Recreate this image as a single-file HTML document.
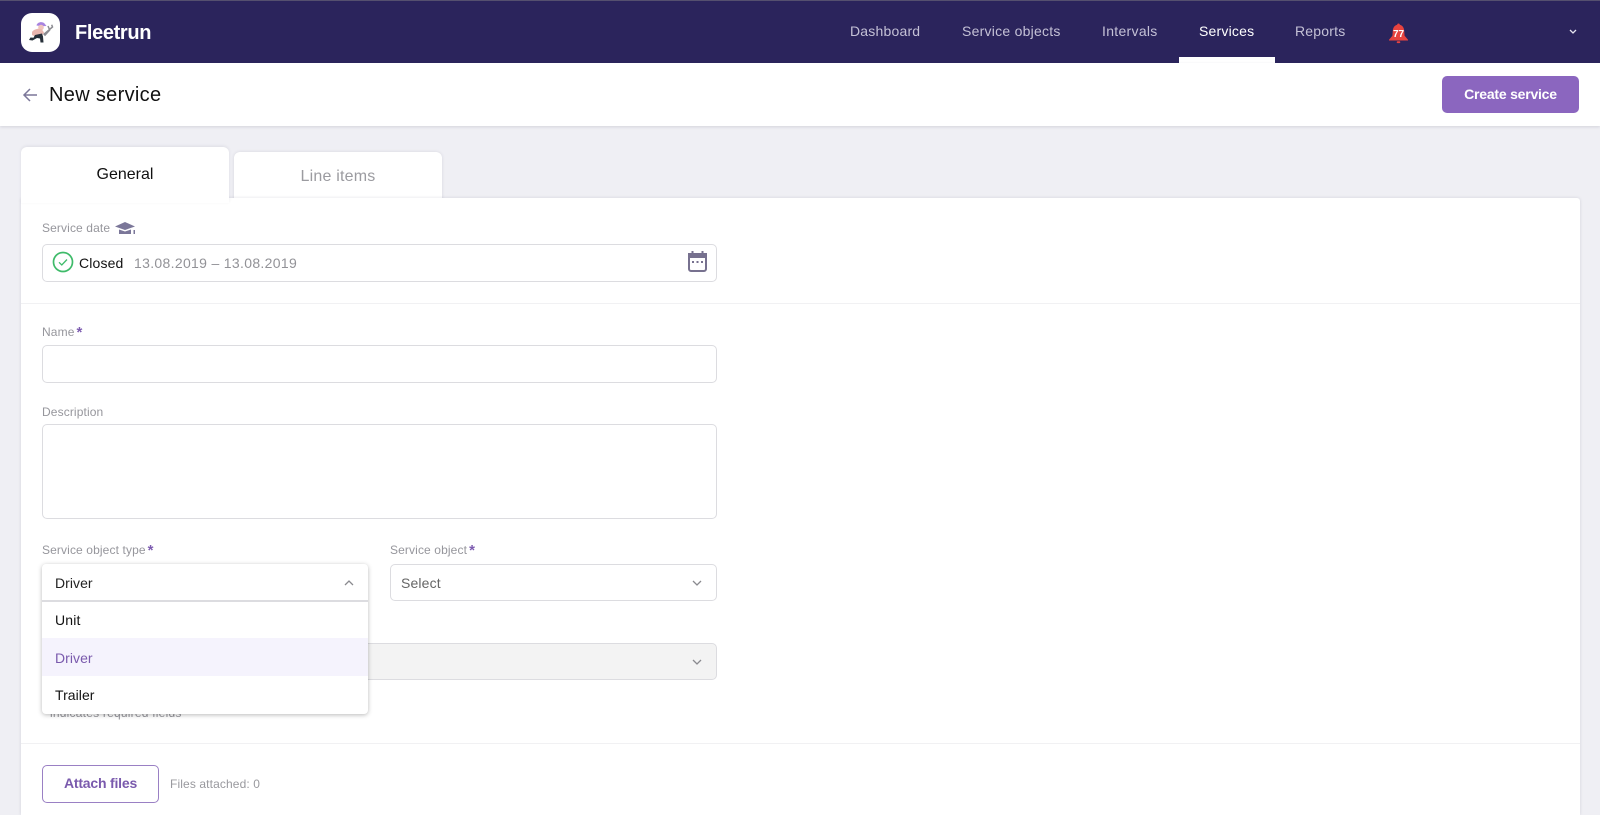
<!DOCTYPE html>
<html><head><meta charset="utf-8"><title>Fleetrun</title>
<style>
*{box-sizing:border-box}
html,body{margin:0;padding:0;width:1600px;height:815px;overflow:hidden;background:#efeff4;font-family:"Liberation Sans",sans-serif;-webkit-font-smoothing:antialiased}
#w{position:relative;width:1600px;height:815px;overflow:hidden}
.a{position:absolute}
.t{position:absolute;white-space:nowrap;line-height:20px;height:20px}
.nav{color:#c4c1d6;font-size:14px;top:21px;letter-spacing:.2px}
.lb{color:#96969c;font-size:12px;letter-spacing:.12px}
.st{color:#7d5cb0;font-size:15px;font-weight:700;margin-left:2px;position:relative;top:1px;line-height:10px;letter-spacing:0}
.in{position:absolute;background:#fff;border:1px solid #dcdce0;border-radius:5px}
.fld{font-size:14px;color:#222;letter-spacing:.05px}
</style></head><body><div id="w">
<div class="a" style="left:0;top:1px;width:1600px;height:62px;background:#2b245c"></div>
<div class="a" style="left:0;top:0;width:1600px;height:1px;background:#55506f"></div>
<div class="a" style="left:21px;top:13px;width:39px;height:39px;background:#fff;border-radius:11px"></div>
<svg class="a" style="left:21px;top:13px" width="39" height="39" viewBox="0 0 39 39">
<path d="M15.500 12.500c.5-3.500 6-4.500 8-2l2 2.500-5 .2z" fill="#a883e0"/>
<circle cx="20" cy="14.500" r="2.800" fill="#f0c4bd"/>
<path d="M11 19c2-3 7-4 10-2.500l2 3-2 3-6 1.500-4-2z" fill="#e9b7b0"/>
<path d="M14 22l7-1.500 1 3 .5 6h-3l-.5-4-3-.5-4.500 2.500-3.500-.5 1.500-2.500 3 .2z" fill="#27303a"/>
<path d="M22 21l6-5 1.500 1.200-5.500 6z" fill="#8c8c92"/>
<path d="M27 13l1.500 3.500 3-2.500-.8-2.200" fill="none" stroke="#8c8c92" stroke-width="1.500"/>
</svg>
<div class="t" style="left:75px;top:22px;color:#fff;font-size:20px;font-weight:700;line-height:22px;height:22px;letter-spacing:-.35px">Fleetrun</div>
<div class="t nav" style="left:850px">Dashboard</div>
<div class="t nav" style="left:962px;letter-spacing:.25px">Service objects</div>
<div class="t nav" style="left:1102px;letter-spacing:.3px">Intervals</div>
<div class="t nav" style="left:1199px;color:#fff">Services</div>
<div class="t nav" style="left:1295px">Reports</div>
<div class="a" style="left:1179px;top:57px;width:96px;height:6px;background:#fff"></div>
<svg class="a" style="left:1387px;top:22px" width="23" height="22" viewBox="0 0 23 22"><path d="M11.500 1.500c.8 0 1.300.5 1.300 1.300 3 .8 4.200 3.200 4.400 6l.4 5 3.400 4v.7H2v-.7l3.400-4 .4-5c.2-2.800 1.400-5.200 4.400-6 0-.8.500-1.300 1.300-1.300z" fill="#e8433f"/><rect x="9.700" y="19.300" width="3.600" height="1.800" rx=".9" fill="#e8433f"/></svg>
<div class="t" style="left:1387px;top:25px;width:23px;text-align:center;color:#fff;font-size:10px;font-weight:700">77</div>
<svg class="a" style="left:1567px;top:28px" width="12" height="8" viewBox="0 0 12 8"><path d="M3 2l3 3 3-3" fill="none" stroke="#e6e5ef" stroke-width="1.300"/></svg>

<div class="a" style="left:0;top:63px;width:1600px;height:63px;background:#fff;box-shadow:0 1px 3px rgba(40,40,70,.14)"></div>
<svg class="a" style="left:22px;top:87px" width="16" height="16" viewBox="0 0 16 16"><path d="M15 8H2M8 2L2 8l6 6" fill="none" stroke="#7b7799" stroke-width="1.500"/></svg>
<div class="t" style="left:49px;top:84px;font-size:20px;line-height:22px;height:22px;color:#111;letter-spacing:.32px">New service</div>
<div class="a" style="left:1442px;top:76px;width:137px;height:37px;background:#8b66bf;border-radius:5px;color:#fff;font-weight:700;font-size:14px;line-height:37px;text-align:center;letter-spacing:-.22px">Create service</div>

<div class="a" style="left:234px;top:152px;width:208px;height:50px;background:#fff;border-radius:6px 6px 0 0;box-shadow:0 0 3px rgba(40,40,70,.12)"></div>
<div class="t" style="left:234px;top:167px;width:208px;text-align:center;color:#9b9ba0;font-size:16px;letter-spacing:.2px">Line items</div>
<div class="a" style="left:21px;top:198px;width:1559px;height:617px;background:#fff;border-radius:3px 3px 0 0;box-shadow:0 0 3px rgba(40,40,70,.14)"></div>
<div class="a" style="left:21px;top:147px;width:208px;height:56px;background:#fff;border-radius:6px 6px 0 0;box-shadow:0 -1px 3px rgba(40,40,70,.08)"></div>
<div class="t" style="left:21px;top:165px;width:208px;text-align:center;color:#111;font-size:16px">General</div>

<div class="t lb" style="left:42px;top:218px">Service date</div>
<svg class="a" style="left:114px;top:221px" width="22" height="15" viewBox="0 0 22 15"><path d="M11 1L1 5.500 11 9l10-3.500z" fill="#7b7799"/><path d="M5 8.500V13h12V8.500L11 10.500z" fill="#7b7799"/><rect x="19.500" y="9" width="1.500" height="4" fill="#7b7799"/></svg>
<div class="in" style="left:42px;top:244px;width:675px;height:37.500px"></div>
<svg class="a" style="left:52px;top:251px" width="22" height="22" viewBox="0 0 22 22"><circle cx="11" cy="11" r="9.500" fill="none" stroke="#3fbb6a" stroke-width="1.700"/><path d="M7 11.300l2.800 2.700 5.200-5.500" fill="none" stroke="#3fbb6a" stroke-width="1.300"/></svg>
<div class="t fld" style="left:79px;top:253px;color:#111;letter-spacing:.15px">Closed</div>
<div class="t fld" style="left:134px;top:253px;color:#929297;letter-spacing:.32px">13.08.2019 – 13.08.2019</div>
<svg class="a" style="left:687px;top:250px" width="21" height="23" viewBox="0 0 21 23"><rect x="2" y="4" width="17" height="17" rx="2" fill="#fff" stroke="#77718f" stroke-width="2"/><rect x="1" y="3" width="19" height="5" fill="#77718f"/><rect x="4.500" y="1" width="2" height="4" fill="#77718f"/><rect x="14.500" y="1" width="2" height="4" fill="#77718f"/><rect x="5" y="11" width="2" height="2" fill="#77718f"/><rect x="9.500" y="11" width="2" height="2" fill="#77718f"/><rect x="14" y="11" width="2" height="2" fill="#77718f"/></svg>
<div class="a" style="left:21px;top:303px;width:1559px;height:1px;background:#f1f1f3"></div>

<div class="t lb" style="left:42px;top:322px">Name<span class="st">*</span></div>
<div class="in" style="left:42px;top:345px;width:675px;height:37.500px"></div>
<div class="t lb" style="left:42px;top:402px">Description</div>
<div class="in" style="left:42px;top:424px;width:675px;height:94.500px"></div>

<div class="t lb" style="left:42px;top:540px">Service object type<span class="st">*</span></div>
<div class="t lb" style="left:390px;top:540px">Service object<span class="st">*</span></div>
<div class="in" style="left:390px;top:564px;width:327px;height:37px"></div>
<div class="t fld" style="left:401px;top:573px;color:#666;letter-spacing:.15px">Select</div>
<svg class="a" style="left:691px;top:578px" width="12" height="10" viewBox="0 0 12 10"><path d="M2 3l4 4 4-4" fill="none" stroke="#8a8a8f" stroke-width="1.300"/></svg>
<div class="in" style="left:300px;top:642.500px;width:417px;height:37.500px;background:#f3f3f3"></div>
<svg class="a" style="left:691px;top:657px" width="12" height="10" viewBox="0 0 12 10"><path d="M2 3l4 4 4-4" fill="none" stroke="#8a8a8f" stroke-width="1.300"/></svg>
<div class="t" style="left:50px;top:703px;font-size:12px;color:#96969c;letter-spacing:.22px">indicates required fields</div>

<div class="a" style="left:42px;top:564px;width:326px;height:149.500px;background:#fff;border-radius:4px;box-shadow:0 1px 5px rgba(0,0,0,.28)"></div>
<div class="a" style="left:42px;top:600px;width:326px;height:2px;background:#dcdce0"></div>
<div class="a" style="left:42px;top:638px;width:326px;height:38px;background:#f5f3fd"></div>
<div class="t fld" style="left:55px;top:573px">Driver</div>
<svg class="a" style="left:343px;top:578px" width="12" height="10" viewBox="0 0 12 10"><path d="M2 7l4-4 4 4" fill="none" stroke="#8a8a8f" stroke-width="1.300"/></svg>
<div class="t fld" style="left:55px;top:610px;color:#111;letter-spacing:.15px">Unit</div>
<div class="t fld" style="left:55px;top:648px;color:#7a5aad">Driver</div>
<div class="t fld" style="left:55px;top:685px;color:#111">Trailer</div>

<div class="a" style="left:21px;top:743px;width:1559px;height:1px;background:#f1f1f3"></div>
<div class="a" style="left:42px;top:765px;width:117px;height:37.500px;background:#fff;border:1px solid #9a80c4;border-radius:5px;color:#7a5aad;font-weight:700;font-size:14px;line-height:34px;text-align:center;letter-spacing:-.2px">Attach files</div>
<div class="t lb" style="left:170px;top:774px;color:#99999e;letter-spacing:.12px">Files attached: 0</div>
</div></body></html>
